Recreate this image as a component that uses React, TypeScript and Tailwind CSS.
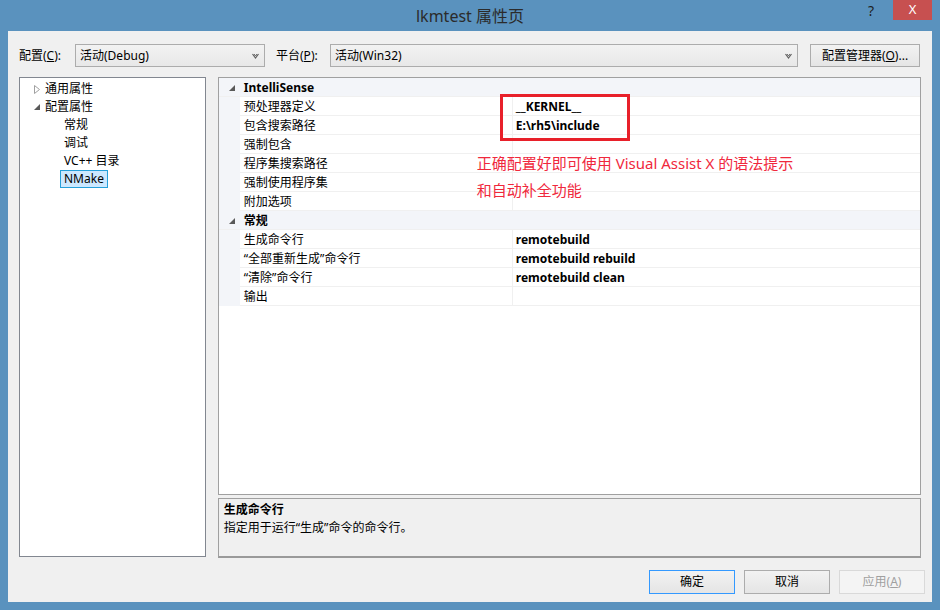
import React from "react";

const font = { fontFamily: '"Noto Sans", "Noto Sans CJK SC", sans-serif' };

function Expanded() {
  return (
    <svg width="6" height="6" viewBox="0 0 6 6" className="shrink-0">
      <polygon points="6,0 6,6 0,6" fill="#595959" />
    </svg>
  );
}

function Collapsed() {
  return (
    <svg width="6" height="9" viewBox="0 0 6 9" className="shrink-0">
      <polygon points="0.5,0.5 5.5,4.5 0.5,8.5" fill="none" stroke="#a0a0a0" />
    </svg>
  );
}

function Chevron() {
  return (
    <svg width="7" height="6" viewBox="0 0 7 6">
      <path d="M0.5 1 L3.5 5 L6.5 1" fill="none" stroke="#606060" strokeWidth="1.2" />
      <path d="M2 1 L3.5 3 L5 1" fill="none" stroke="#606060" strokeWidth="1" />
    </svg>
  );
}

function Section({ title }: { title: string }) {
  return (
    <div className="h-[19px] flex items-center bg-[#f3f5f9] pl-[10px] pt-[1px] border-b border-[#f0f0f0]">
      <Expanded />
      <span className="ml-[9px] font-bold text-[12px] text-black">{title}</span>
    </div>
  );
}

function Prop({ name, value }: { name: string; value?: string }) {
  return (
    <div className="h-[19px] flex bg-[#f3f5f9]">
      <div className="w-[21px]" />
      <div className="w-[273px] bg-white border-b border-r border-[#f0f0f0] flex items-center pl-[4px] pt-[1px] text-[12px] text-black">
        {name}
      </div>
      <div className="flex-1 bg-white border-b border-[#f0f0f0] flex items-center pl-[3px] pt-[1px] text-[12px] font-bold text-black">
        {value}
      </div>
    </div>
  );
}

export default function App() {
  const tree = ["常规", "调试", "VC++ 目录"];

  return (
    <div className="w-[940px] h-[610px] bg-[#5a92be] flex flex-col overflow-hidden" style={font}>
      {/* title bar */}
      <div className="h-[31px] grid grid-cols-[1fr_auto_1fr]">
        <div />
        <div className="h-[31px] flex items-center text-[16px] text-[#2b2b2b]">lkmtest 属性页</div>
        <div className="flex justify-end items-start">
          <div className="w-[28px] h-[21px] flex items-center justify-center text-[14px] text-[#1e1e1e] mr-[8px]">?</div>
          <div className="w-[39px] h-[20px] bg-[#c75050] flex items-center justify-center text-[13px] text-white mr-[8px]">
            X
          </div>
        </div>
      </div>

      {/* client area */}
      <div className="mx-[8px] h-[571px] bg-[#f0f0f0] flex flex-col pl-[11px] pr-[11px] text-black">
        {/* config row */}
        <div className="mt-[13px] h-[23px] flex items-center text-[12px]">
          <span className="w-[56px] whitespace-nowrap">
            配置(<span className="underline">C</span>):
          </span>
          <div className="w-[190px] h-[23px] border border-[#acacac] bg-gradient-to-b from-[#f2f2f2] to-[#e8e8e8] flex items-center justify-between pl-[4px] pr-[5px]">
            <span>活动(Debug)</span>
            <Chevron />
          </div>
          <span className="ml-[11px] w-[54px] whitespace-nowrap">
            平台(<span className="underline">P</span>):
          </span>
          <div className="w-[468px] h-[23px] border border-[#acacac] bg-gradient-to-b from-[#f2f2f2] to-[#e8e8e8] flex items-center justify-between pl-[4px] pr-[5px]">
            <span>活动(Win32)</span>
            <Chevron />
          </div>
          <div className="ml-[12px] w-[110px] h-[23px] border border-[#acacac] bg-gradient-to-b from-[#f2f2f2] to-[#e5e5e5] flex items-center justify-center whitespace-nowrap">
            配置管理器(<span className="underline">O</span>)...
          </div>
        </div>

        {/* main panes */}
        <div className="mt-[10px] flex gap-[12px]">
          {/* tree */}
          <div className="w-[187px] h-[480px] bg-white border border-[#828790] pt-[2px] text-[12px]">
            <div className="h-[18px] flex items-center pl-[14px]">
              <Collapsed />
              <span className="ml-[5px]">通用属性</span>
            </div>
            <div className="h-[18px] flex items-center pl-[14px]">
              <Expanded />
              <span className="ml-[5px]">配置属性</span>
            </div>
            {tree.map((t) => (
              <div key={t} className="h-[18px] flex items-center pl-[44px]">
                {t}
              </div>
            ))}
            <div className="h-[18px] flex items-center pl-[40px]">
              <span className="h-[18px] px-[3px] flex items-center bg-[#cce8ff] border border-[#26a0da]">NMake</span>
            </div>
          </div>

          {/* property grid + description */}
          <div className="w-[704px] flex flex-col">
            <div className="relative h-[418px] bg-white border border-[#a0a0a0]">
              <Section title="IntelliSense" />
              <Prop name="预处理器定义" value="__KERNEL__" />
              <Prop name="包含搜索路径" value="E:\rh5\include" />
              <Prop name="强制包含" />
              <Prop name="程序集搜索路径" />
              <Prop name="强制使用程序集" />
              <Prop name="附加选项" />
              <Section title="常规" />
              <Prop name="生成命令行" value="remotebuild" />
              <Prop name="“全部重新生成”命令行" value="remotebuild rebuild" />
              <Prop name="“清除”命令行" value="remotebuild clean" />
              <Prop name="输出" />

              {/* annotation overlay */}
              <div className="absolute left-[281px] top-[16px] w-[130px] h-[47px] border-[3px] border-[#e8202a]" />
              <div className="absolute left-[258px] top-[72px] text-[15px] leading-[27px] text-[#f0283c] whitespace-nowrap">
                <div>正确配置好即可使用 Visual Assist X 的语法提示</div>
                <div>和自动补全功能</div>
              </div>
            </div>
            <div className="mt-[3px] h-[60px] bg-[#f0f0f0] border border-[#a0a0a0] border-b-2 border-b-[#9a9a9a] px-[5px] pt-[2px] text-[12px]">
              <div className="font-bold leading-[18px]">生成命令行</div>
              <div className="leading-[18px]">指定用于运行“生成”命令的命令行。</div>
            </div>
          </div>
        </div>

        {/* buttons */}
        <div className="mt-[12px] flex justify-end gap-[9px] mr-[-4px] text-[12px]">
          <div className="w-[86px] h-[24px] border border-[#3399ff] bg-gradient-to-b from-[#f2f2f2] to-[#e5e5e5] flex items-center justify-center">
            确定
          </div>
          <div className="w-[86px] h-[24px] border border-[#acacac] bg-gradient-to-b from-[#f2f2f2] to-[#e5e5e5] flex items-center justify-center">
            取消
          </div>
          <div className="w-[86px] h-[24px] border border-[#d9d9d9] bg-[#f4f4f4] text-[#a0a0a0] flex items-center justify-center">
            应用(<span className="underline">A</span>)
          </div>
        </div>
      </div>
    </div>
  );
}
